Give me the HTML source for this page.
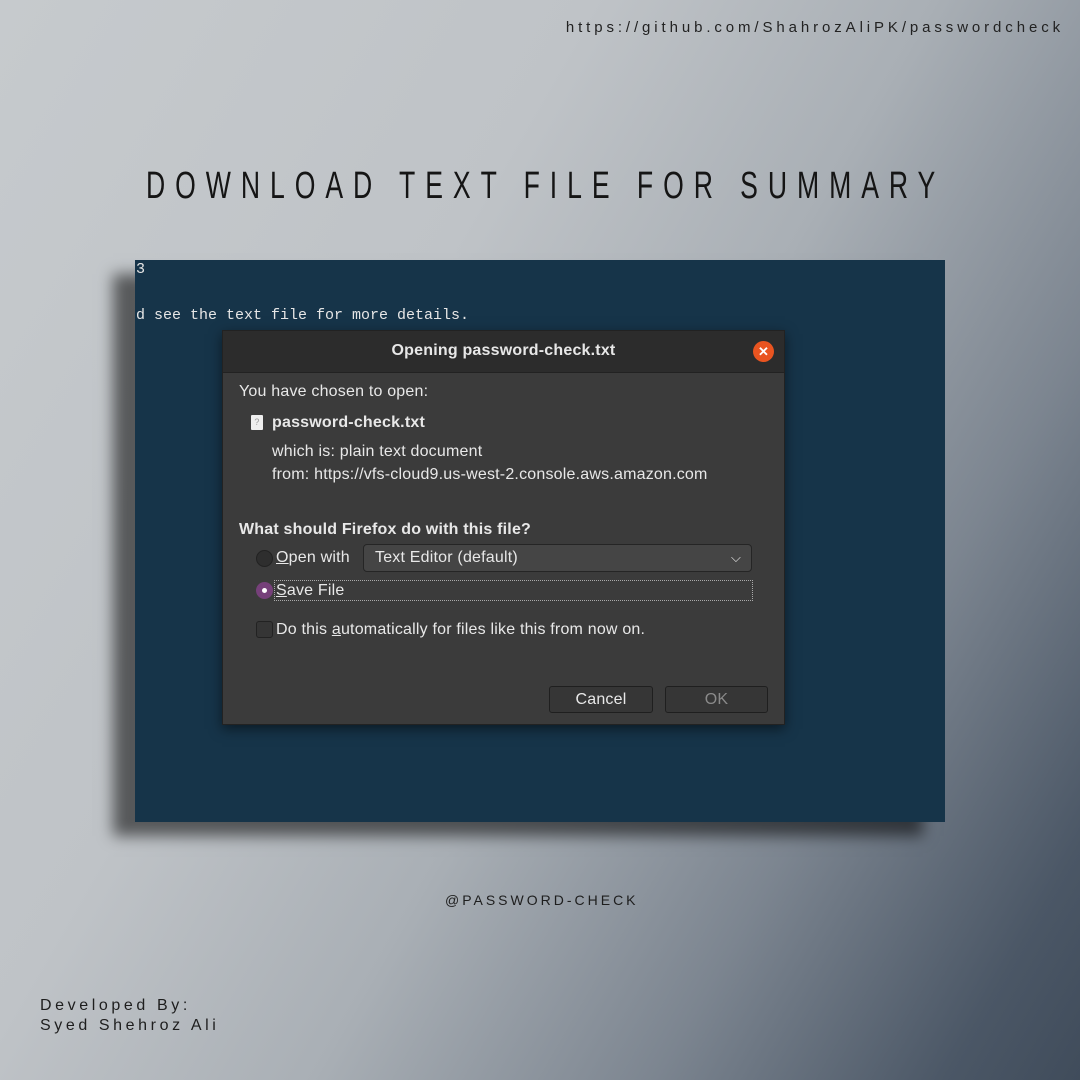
<!DOCTYPE html>
<html><head><meta charset="utf-8"><style>
*{margin:0;padding:0;box-sizing:border-box}
body{width:1080px;height:1080px;overflow:hidden;position:relative;font-family:"Liberation Sans",sans-serif;
background:linear-gradient(120deg,#c6cacd 0%,#bfc3c7 35%,#a9afb5 55%,#7c8590 75%,#4b5766 92%,#404c5b 100%);}
.t{position:absolute;color:#1e1e1e;white-space:nowrap}
.term{position:absolute;left:135px;top:260px;width:810px;height:562px;background:#163449;box-shadow:-22px 14px 14px rgba(0,0,0,.55);font-family:"Liberation Mono",monospace;color:#e6e6e6;font-size:15px}
.dlg{position:absolute;left:222px;top:330px;width:563px;height:395px;background:#3b3b3b;border:1px solid #222;box-shadow:0 4px 12px rgba(0,0,0,.5);color:#e8e8e8;font-size:16px;letter-spacing:0.2px}
.tb{height:42px;background:#2c2c2c;border-bottom:1px solid #222;text-align:center;line-height:40px;font-weight:bold;font-size:16px}
.x{position:absolute;right:10px;top:10px;width:21px;height:21px;border-radius:50%;background:#e95420;color:#fff;font-size:13px;line-height:21px;text-align:center;font-weight:bold;letter-spacing:0}
.a{position:absolute;white-space:nowrap}
.btn{position:absolute;height:27px;border:1px solid #1f1f1f;border-radius:3px;background:#363636;text-align:center;line-height:25px}
</style></head><body>
<div class="t" style="right:16px;top:19px;font-size:15px;letter-spacing:3.9px;color:#222">https://github.com/ShahrozAliPK/passwordcheck</div>
<div class="t" style="left:146px;top:165px;font-size:38px;letter-spacing:14.2px;color:#151515;transform:scaleX(0.7);transform-origin:0 0">DOWNLOAD TEXT FILE FOR SUMMARY</div>
<div class="term">
<div class="a" style="left:1px;top:1px">3</div>
<div class="a" style="left:1px;top:47px">d see the text file for more details.</div>
</div>
<div class="dlg">
<div class="tb">Opening password-check.txt</div>
<div class="x">✕</div>
<div class="a" style="left:16px;top:52px">You have chosen to open:</div>
<div class="a" style="left:28px;top:84px;width:12px;height:15px;background:#eee;border-radius:1px;color:#999;font-size:9px;text-align:center;line-height:15px">?</div>
<div class="a" style="left:49px;top:83px;font-weight:bold">password-check.txt</div>
<div class="a" style="left:49px;top:112px">which is: plain text document</div>
<div class="a" style="left:49px;top:135px">from: https://vfs-cloud9.us-west-2.console.aws.amazon.com</div>
<div class="a" style="left:16px;top:190px;font-weight:bold">What should Firefox do with this file?</div>
<div class="a" style="left:33px;top:219px;width:17px;height:17px;border-radius:50%;background:#2e2e2e;border:1px solid #222"></div>
<div class="a" style="left:53px;top:218px"><u>O</u>pen with</div>
<div class="a" style="left:140px;top:213px;width:389px;height:28px;background:#454545;border:1px solid #252525;border-radius:4px;padding-left:11px;line-height:26px">Text Editor (default)<span style="position:absolute;right:10px;top:0;font-size:13px">⌵</span></div>
<div class="a" style="left:33px;top:251px;width:17px;height:17px;border-radius:50%;background:#76407a"><div style="position:absolute;left:6px;top:6px;width:5px;height:5px;border-radius:50%;background:#fff"></div></div>
<div class="a" style="left:51px;top:249px;width:479px;height:21px;border:1px dotted #aaa;padding-left:1px;line-height:19px"><u>S</u>ave File</div>
<div class="a" style="left:33px;top:290px;width:17px;height:17px;border-radius:3px;background:#353535;border:1px solid #222"></div>
<div class="a" style="left:53px;top:290px">Do this <u>a</u>utomatically for files like this from now on.</div>
<div class="btn" style="left:326px;top:355px;width:104px">Cancel</div>
<div class="btn" style="left:442px;top:355px;width:103px;color:#8a8a8a">OK</div>
</div>
<div class="t" style="left:445px;top:892px;font-size:14px;letter-spacing:3px;color:#1e1e1e">@PASSWORD-CHECK</div>
<div class="t" style="left:40px;top:996px;font-size:16px;letter-spacing:3.6px;line-height:20px;color:#1e1e1e">Developed By:<br>Syed Shehroz Ali</div>
</body></html>
